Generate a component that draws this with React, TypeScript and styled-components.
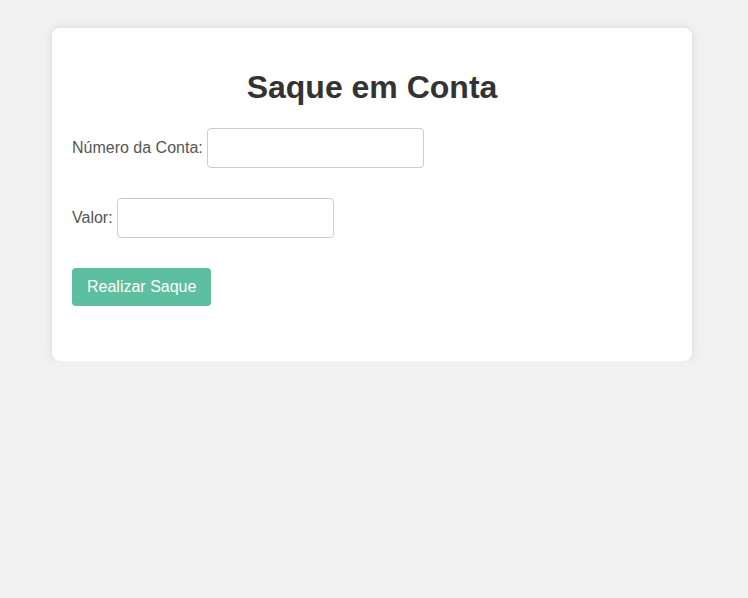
import styled, { createGlobalStyle } from 'styled-components';

const GlobalStyle = createGlobalStyle`
  body {
    margin: 8px;
    background-color: #f1f1f1;
    font-family: "Liberation Sans", Arial, sans-serif;
  }
`;

const Card = styled.div`
  width: 640px;
  box-sizing: border-box;
  margin: 20px 0 0 44px;
  padding: 20px;
  background: #ffffff;
  border-radius: 8px;
  box-shadow: 0 0 10px rgba(0, 0, 0, 0.1);
`;

const Title = styled.h1`
  margin: 21px 0 22px;
  text-align: center;
  font-size: 32px;
  font-weight: bold;
  color: #333333;
`;

const Field = styled.div`
  display: flex;
  align-items: center;
  margin-bottom: 30px;
`;

const Label = styled.label`
  font-size: 16px;
  color: #555555;
  margin-right: 4px;
`;

const Input = styled.input`
  box-sizing: border-box;
  width: 217px;
  height: 40px;
  padding: 10px;
  border: 1px solid #cccccc;
  border-radius: 4px;
  font-size: 16px;
  font-family: inherit;
`;

const Button = styled.button`
  height: 38px;
  padding: 0 15px;
  margin-bottom: 35px;
  border: none;
  border-radius: 4px;
  background-color: #5dbea0;
  color: #ffffff;
  font-size: 16px;
  font-family: inherit;
  cursor: pointer;
`;

export default function App() {
  return (
    <>
      <GlobalStyle />
      <Card>
        <Title>Saque em Conta</Title>
        <form onSubmit={(e) => e.preventDefault()}>
          <Field>
            <Label htmlFor="conta">Número da Conta:</Label>
            <Input id="conta" type="text" />
          </Field>
          <Field>
            <Label htmlFor="valor">Valor:</Label>
            <Input id="valor" type="number" />
          </Field>
          <Button type="submit">Realizar Saque</Button>
        </form>
      </Card>
    </>
  );
}
